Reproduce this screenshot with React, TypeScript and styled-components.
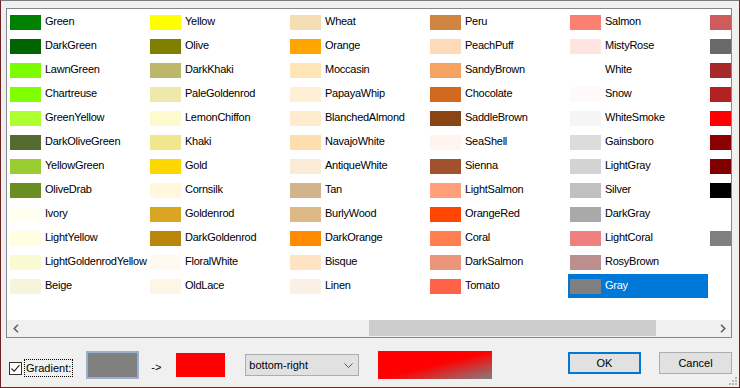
import styled, { createGlobalStyle } from "styled-components";

const GlobalStyle = createGlobalStyle`
  html, body {
    margin: 0;
    padding: 0;
    background: #f0f0f0;
  }
  body {
    font-family: "Liberation Sans", Arial, sans-serif;
    font-size: 11px;
    color: #000;
  }
  * {
    box-sizing: border-box;
  }
`;

type NamedColor = { name: string; hex: string };

const colors: NamedColor[] = [
  { name: "Green", hex: "#008000" },
  { name: "DarkGreen", hex: "#006400" },
  { name: "LawnGreen", hex: "#7cfc00" },
  { name: "Chartreuse", hex: "#7fff00" },
  { name: "GreenYellow", hex: "#adff2f" },
  { name: "DarkOliveGreen", hex: "#556b2f" },
  { name: "YellowGreen", hex: "#9acd32" },
  { name: "OliveDrab", hex: "#6b8e23" },
  { name: "Ivory", hex: "#fffff0" },
  { name: "LightYellow", hex: "#ffffe0" },
  { name: "LightGoldenrodYellow", hex: "#fafad2" },
  { name: "Beige", hex: "#f5f5dc" },

  { name: "Yellow", hex: "#ffff00" },
  { name: "Olive", hex: "#808000" },
  { name: "DarkKhaki", hex: "#bdb76b" },
  { name: "PaleGoldenrod", hex: "#eee8aa" },
  { name: "LemonChiffon", hex: "#fffacd" },
  { name: "Khaki", hex: "#f0e68c" },
  { name: "Gold", hex: "#ffd700" },
  { name: "Cornsilk", hex: "#fff8dc" },
  { name: "Goldenrod", hex: "#daa520" },
  { name: "DarkGoldenrod", hex: "#b8860b" },
  { name: "FloralWhite", hex: "#fffaf0" },
  { name: "OldLace", hex: "#fdf5e6" },

  { name: "Wheat", hex: "#f5deb3" },
  { name: "Orange", hex: "#ffa500" },
  { name: "Moccasin", hex: "#ffe4b5" },
  { name: "PapayaWhip", hex: "#ffefd5" },
  { name: "BlanchedAlmond", hex: "#ffebcd" },
  { name: "NavajoWhite", hex: "#ffdead" },
  { name: "AntiqueWhite", hex: "#faebd7" },
  { name: "Tan", hex: "#d2b48c" },
  { name: "BurlyWood", hex: "#deb887" },
  { name: "DarkOrange", hex: "#ff8c00" },
  { name: "Bisque", hex: "#ffe4c4" },
  { name: "Linen", hex: "#faf0e6" },

  { name: "Peru", hex: "#cd853f" },
  { name: "PeachPuff", hex: "#ffdab9" },
  { name: "SandyBrown", hex: "#f4a460" },
  { name: "Chocolate", hex: "#d2691e" },
  { name: "SaddleBrown", hex: "#8b4513" },
  { name: "SeaShell", hex: "#fff5ee" },
  { name: "Sienna", hex: "#a0522d" },
  { name: "LightSalmon", hex: "#ffa07a" },
  { name: "OrangeRed", hex: "#ff4500" },
  { name: "Coral", hex: "#ff7f50" },
  { name: "DarkSalmon", hex: "#e9967a" },
  { name: "Tomato", hex: "#ff6347" },

  { name: "Salmon", hex: "#fa8072" },
  { name: "MistyRose", hex: "#ffe4e1" },
  { name: "White", hex: "#ffffff" },
  { name: "Snow", hex: "#fffafa" },
  { name: "WhiteSmoke", hex: "#f5f5f5" },
  { name: "Gainsboro", hex: "#dcdcdc" },
  { name: "LightGray", hex: "#d3d3d3" },
  { name: "Silver", hex: "#c0c0c0" },
  { name: "DarkGray", hex: "#a9a9a9" },
  { name: "LightCoral", hex: "#f08080" },
  { name: "RosyBrown", hex: "#bc8f8f" },
  { name: "Gray", hex: "#808080" },

  { name: "IndianRed", hex: "#cd5c5c" },
  { name: "DimGray", hex: "#696969" },
  { name: "Brown", hex: "#a52a2a" },
  { name: "Firebrick", hex: "#b22222" },
  { name: "Red", hex: "#ff0000" },
  { name: "DarkRed", hex: "#8b0000" },
  { name: "Maroon", hex: "#800000" },
  { name: "Black", hex: "#000000" },
  { name: "Transparent", hex: "transparent" },
  { name: "Grey", hex: "#808080" },
];

const selectedName = "Gray";

const Window = styled.div`
  position: relative;
  width: 740px;
  height: 388px;
  display: flex;
  flex-direction: column;
  padding: 7px 7px 0 5px;
  background: #f0f0f0;
  border: 1px solid #6b2323;
  border-top-color: #7c7c7c;
`;

const ListBox = styled.div`
  width: 726px;
  height: 330px;
  display: flex;
  flex-direction: column;
  background: #fff;
  border: 1px solid #828790;
`;

const ColorGrid = styled.div`
  flex: 1;
  overflow: hidden;
  padding: 1px 0 0 1px;
  display: grid;
  grid-auto-flow: column;
  grid-template-rows: repeat(12, 24px);
  grid-auto-columns: 140px;
  align-content: start;
`;

const Item = styled.div<{ $selected?: boolean }>`
  display: flex;
  align-items: flex-start;
  gap: 4px;
  padding-left: 2px;
  height: 24px;
  background: ${(p) => (p.$selected ? "#0078d7" : "transparent")};
  color: ${(p) => (p.$selected ? "#fff" : "#000")};
`;

const Swatch = styled.span<{ $color: string }>`
  flex: none;
  width: 31px;
  height: 15px;
  margin-top: 5px;
  background: ${(p) => p.$color};
`;

const ItemName = styled.span`
  line-height: 23px;
  letter-spacing: -0.25px;
  white-space: nowrap;
`;

const HScroll = styled.div`
  height: 17px;
  display: flex;
  background: #f0f0f0;
`;

const ScrollArrow = styled.div`
  flex: none;
  width: 17px;
  display: flex;
  align-items: center;
  justify-content: center;
`;

const ScrollTrack = styled.div`
  flex: 1;
  display: flex;
`;

const ScrollThumb = styled.div<{ $offset: number; $size: number }>`
  margin: 0 0 1px ${(p) => p.$offset}px;
  width: ${(p) => p.$size}px;
  background: #cdcdcd;
`;

const Footer = styled.div`
  flex: 1;
  display: flex;
  align-items: flex-start;
`;

const CheckRow = styled.label`
  display: flex;
  align-items: center;
  gap: 2px;
  margin: 21px 0 0 3px;
`;

const CheckBox = styled.span`
  width: 13px;
  height: 13px;
  display: flex;
  align-items: center;
  justify-content: center;
  background: #fff;
  border: 1px solid #333;
`;

const FocusText = styled.span`
  height: 18px;
  line-height: 16px;
  padding: 0 1px;
  border: 1px dotted #000;
`;

const ColorButton = styled.div<{ $color: string; $focused?: boolean; $gap: number }>`
  width: 53px;
  height: 28px;
  margin: 13px 0 0 ${(p) => p.$gap}px;
  background: ${(p) => p.$color};
  border: 2px solid ${(p) => (p.$focused ? "#99b0cc" : "#f0f0f0")};
`;

const Arrow = styled.span`
  margin: 22px 0 0 12px;
  line-height: 14px;
`;

const ComboBox = styled.div`
  width: 114px;
  height: 22px;
  margin: 16px 0 0 18px;
  display: flex;
  align-items: center;
  justify-content: space-between;
  padding: 0 5px 0 3px;
  background: #e1e1e1;
  border: 1px solid #adadad;
`;

const GradientPreview = styled.div`
  width: 114px;
  height: 28px;
  margin: 13px 0 0 19px;
  background: linear-gradient(to bottom right, #ff0000 50%, #c83a3a 72%, #808080 100%);
`;

const DialogButton = styled.button<{ $default?: boolean }>`
  width: 73px;
  height: 22px;
  margin-top: 14px;
  padding: 0;
  font: inherit;
  color: #000;
  background: #e1e1e1;
  border: ${(p) => (p.$default ? "2px solid #0078d7" : "1px solid #adadad")};

  &:first-of-type {
    margin-left: auto;
  }
  & + & {
    margin-left: 18px;
  }
`;

const SizeGrip = styled.svg`
  position: absolute;
  right: 1px;
  bottom: 1px;
`;

export default function App() {
  return (
    <>
      <GlobalStyle />
      <Window>
        <ListBox>
          <ColorGrid>
            {colors.map((c) => (
              <Item key={c.name} $selected={c.name === selectedName}>
                <Swatch $color={c.hex} />
                <ItemName>{c.name}</ItemName>
              </Item>
            ))}
          </ColorGrid>
          <HScroll>
            <ScrollArrow>
              <svg width="8" height="9" viewBox="0 0 8 9">
                <path d="M6 0.8 L2.2 4.5 L6 8.2" fill="none" stroke="#606060" strokeWidth="1.6" />
              </svg>
            </ScrollArrow>
            <ScrollTrack>
              <ScrollThumb $offset={345} $size={287} />
            </ScrollTrack>
            <ScrollArrow>
              <svg width="8" height="9" viewBox="0 0 8 9">
                <path d="M2 0.8 L5.8 4.5 L2 8.2" fill="none" stroke="#606060" strokeWidth="1.6" />
              </svg>
            </ScrollArrow>
          </HScroll>
        </ListBox>
        <Footer>
          <CheckRow>
            <CheckBox>
              <svg width="11" height="11" viewBox="0 0 11 11">
                <path d="M1.5 5.5 L4.2 8.2 L9.5 2.2" fill="none" stroke="#222" strokeWidth="1.1" />
              </svg>
            </CheckBox>
            <FocusText>Gradient:</FocusText>
          </CheckRow>
          <ColorButton $color="#808080" $focused $gap={13} />
          <Arrow>-&gt;</Arrow>
          <ColorButton $color="#ff0000" $gap={13} />
          <ComboBox>
            <span>bottom-right</span>
            <svg width="9" height="5" viewBox="0 0 9 5">
              <path d="M0.5 0.5 L4.5 4.5 L8.5 0.5" fill="none" stroke="#555" strokeWidth="1" />
            </svg>
          </ComboBox>
          <GradientPreview />
          <DialogButton $default>OK</DialogButton>
          <DialogButton>Cancel</DialogButton>
        </Footer>
        <SizeGrip width="10" height="10" viewBox="0 0 10 10">
          <g fill="#b8b8b8">
            <rect x="7" y="1" width="2" height="2" />
            <rect x="4" y="4" width="2" height="2" />
            <rect x="7" y="4" width="2" height="2" />
            <rect x="1" y="7" width="2" height="2" />
            <rect x="4" y="7" width="2" height="2" />
            <rect x="7" y="7" width="2" height="2" />
          </g>
        </SizeGrip>
      </Window>
    </>
  );
}
